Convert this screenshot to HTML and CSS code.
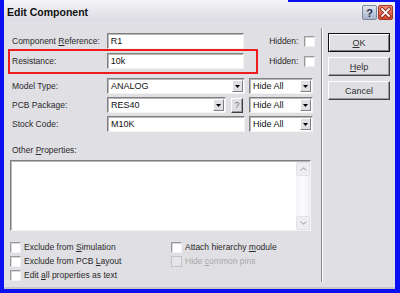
FILE: index.html
```html
<!DOCTYPE html>
<html lang="en">
<head>
    <meta charset="UTF-8">
    <title>Edit Component</title>
    <link rel="stylesheet" href="styles.css">
</head>
<body>
    <div class="window">
        <div class="titlebar">
            <span class="title">Edit Component</span>
            <span class="tb-btn tb-help">?</span>
            <span class="tb-btn tb-close">
                <svg width="11" height="11" viewBox="0 0 11 11">
                    <path d="M2 2 L9 9 M9 2 L2 9" stroke="#7a1a10" stroke-width="3.2" stroke-linecap="square"/>
                    <path d="M2 2 L9 9 M9 2 L2 9" stroke="#fff" stroke-width="1.8" stroke-linecap="square"/>
                </svg>
            </span>
        </div>

        <div class="dialog">
            <div class="fields">
                <div class="row">
                    <label class="lbl">Component <u>R</u>eference:</label>
                    <div class="field w-main">R1</div>
                    <span class="hidden-lbl">Hidden:</span>
                    <span class="check"></span>
                </div>
                <div class="row row-2 highlight">
                    <label class="lbl">Resistance:</label>
                    <div class="field w-main">10k</div>
                    <span class="hidden-lbl">Hidden:</span>
                    <span class="check"></span>
                </div>
                <div class="row row-3">
                    <label class="lbl">Model Type:</label>
                    <div class="combo w-main">
                        <span class="val">ANALOG</span>
                        <span class="arrow"><svg width="5" height="3" viewBox="0 0 5 3"><path d="M0 0 H5 L2.5 3 Z" fill="#000"/></svg></span>
                    </div>
                    <div class="combo w-hide">
                        <span class="val">Hide All</span>
                        <span class="arrow"><svg width="5" height="3" viewBox="0 0 5 3"><path d="M0 0 H5 L2.5 3 Z" fill="#000"/></svg></span>
                    </div>
                </div>
                <div class="row row-n">
                    <label class="lbl">PCB Package:</label>
                    <div class="combo w-pcb">
                        <span class="val">RES40</span>
                        <span class="arrow"><svg width="5" height="3" viewBox="0 0 5 3"><path d="M0 0 H5 L2.5 3 Z" fill="#000"/></svg></span>
                    </div>
                    <span class="mini-btn">?</span>
                    <div class="combo w-hide hide-pcb">
                        <span class="val">Hide All</span>
                        <span class="arrow"><svg width="5" height="3" viewBox="0 0 5 3"><path d="M0 0 H5 L2.5 3 Z" fill="#000"/></svg></span>
                    </div>
                </div>
                <div class="row row-n">
                    <label class="lbl">Stock Code:</label>
                    <div class="field w-main">M10K</div>
                    <div class="combo w-hide">
                        <span class="val">Hide All</span>
                        <span class="arrow"><svg width="5" height="3" viewBox="0 0 5 3"><path d="M0 0 H5 L2.5 3 Z" fill="#000"/></svg></span>
                    </div>
                </div>

                <div class="other-lbl">Other <u>P</u>roperties:</div>
                <div class="textarea">
                    <div class="scrollbar">
                        <span class="sb-btn"><svg width="7" height="4" viewBox="0 0 7 4"><path d="M0.5 3.5 L3.5 0.8 L6.5 3.5" fill="none" stroke="#b4b8c4" stroke-width="1.2"/></svg></span>
                        <span class="sb-track"></span>
                        <span class="sb-btn"><svg width="7" height="4" viewBox="0 0 7 4"><path d="M0.5 0.5 L3.5 3.2 L6.5 0.5" fill="none" stroke="#b4b8c4" stroke-width="1.2"/></svg></span>
                    </div>
                </div>

                <div class="options">
                    <div class="opt"><span class="check"></span><span>Exclude from <u>S</u>imulation</span></div>
                    <div class="opt"><span class="check"></span><span>Attach hierarchy <u>m</u>odule</span></div>
                    <div class="opt"><span class="check"></span><span>Exclude from PCB <u>L</u>ayout</span></div>
                    <div class="opt disabled"><span class="check"></span><span>Hide <u>c</u>ommon pins</span></div>
                    <div class="opt"><span class="check"></span><span>Edit <u>a</u>ll properties as text</span></div>
                </div>
            </div>

            <div class="separator"></div>

            <div class="buttons">
                <span class="btn btn-default"><span><u>O</u>K</span></span>
                <span class="btn"><span><u>H</u>elp</span></span>
                <span class="btn">Cancel</span>
            </div>
        </div>
    </div>
</body>
</html>
```

FILE: styles.css
```css
* {
    box-sizing: border-box;
}
body {
    margin: 0;
    background: #0a10f0;
    font-family: "Liberation Sans", Arial, sans-serif;
    font-size: 8.5px;
    color: #2a2a2a;
}
u {
    text-decoration-thickness: 1px;
    text-underline-offset: 1px;
}
.window {
    position: relative;
    width: 400px;
    height: 293px;
    border-left: 4px solid #0a10f0;
    border-right: 5px solid #0a10f0;
    border-bottom: 5px solid #0a10f0;
    display: flex;
    flex-direction: column;
}
.window::after {
    content: "";
    position: absolute;
    top: 0;
    left: 284px;
    right: -5px;
    height: 2px;
    background: #0a10f0;
}
.titlebar {
    height: 23px;
    display: flex;
    align-items: center;
    padding: 0 2px 1px 3px;
    background: linear-gradient(to bottom, #f4f4f7, #dcdce3);
}
.title {
    flex: 1;
    font-weight: bold;
    font-size: 10.5px;
    color: #111;
    padding-top: 3px;
}
.tb-btn {
    width: 15px;
    height: 15px;
    border-radius: 2px;
    display: flex;
    align-items: center;
    justify-content: center;
    margin-top: 5px;
}
.tb-help {
    margin-right: 1px;
    background: linear-gradient(to bottom, #dfe4ef, #a9b3ca);
    border: 1px solid #7d879f;
    font-weight: bold;
    font-size: 11px;
    color: #27304a;
}
.tb-close {
    background: linear-gradient(to bottom, #f08a70, #d0442c);
    border: 1px solid #a03a2a;
}
.dialog {
    flex: 1;
    display: flex;
    background: #e0dfe3;
    padding: 7px 0 5px 6px;
    border-bottom: 2px solid #c6c6cc;
}
.fields {
    width: 305px;
    margin-top: 5px;
    display: flex;
    flex-direction: column;
}
.row {
    display: flex;
    align-items: center;
    height: 16px;
}
.row-2 {
    margin-top: 4px;
}
.row-3 {
    margin-top: 9px;
}
.row-n {
    margin-top: 3px;
}
.highlight {
    position: relative;
}
.highlight::before {
    content: "";
    position: absolute;
    left: -2px;
    top: -4px;
    width: 246px;
    height: 21px;
    border: 2px solid #ee1c1c;
}
.lbl {
    width: 97px;
    padding-left: 2px;
}
.field,
.combo,
.textarea {
    background: #fff;
    border: 1px solid;
    border-color: #7f7f7f #f4f4f0 #f4f4f0 #7f7f7f;
    box-shadow: inset 1px 1px 0 #b8b8b8;
}
.field {
    height: 16px;
    padding: 0 3px;
    line-height: 14px;
    font-size: 9px;
    color: #111;
}
.w-main {
    width: 138px;
}
.w-pcb {
    width: 119px;
}
.w-hide {
    width: 64px;
    margin-left: 4px;
}
.hide-pcb {
    margin-left: 6px;
}
.hidden-lbl {
    margin-left: 25px;
    width: 35px;
}
.check {
    width: 11px;
    height: 11px;
    flex: none;
    background: #fff;
    border: 1px solid;
    border-color: #9a9a9a #f2f2f2 #f2f2f2 #9a9a9a;
    box-shadow: inset 1px 1px 0 #d8d8d8;
}
.combo {
    height: 16px;
    display: flex;
    align-items: center;
    padding: 0 1px 0 3px;
    font-size: 9px;
    color: #111;
}
.combo .val {
    flex: 1;
}
.combo .arrow {
    width: 11px;
    height: 12px;
    display: flex;
    align-items: center;
    justify-content: center;
    background: #e0dfe3;
    border: 1px solid;
    border-color: #fff #7f7f7f #7f7f7f #fff;
}
.mini-btn {
    width: 12px;
    height: 15px;
    margin-left: 5px;
    display: flex;
    align-items: center;
    justify-content: center;
    background: #e0dfe3;
    border: 1px solid;
    border-color: #fff #404040 #404040 #fff;
    box-shadow: inset -1px -1px 0 #9a9a9a;
    color: #777;
    font-size: 9px;
}
.other-lbl {
    margin-top: 12px;
    height: 12px;
    line-height: 12px;
    padding-left: 2px;
}
.textarea {
    margin-top: 4px;
    width: 301px;
    height: 71px;
    display: flex;
    justify-content: flex-end;
    padding: 1px 0 0 0;
}
.scrollbar {
    width: 14px;
    display: flex;
    flex-direction: column;
    background: linear-gradient(to right, #f3f3f8, #fbfbfe, #eeeef4);
}
.sb-btn {
    height: 14px;
    display: flex;
    align-items: center;
    justify-content: center;
    background: #eeeef0;
    border: 1px solid #e2e2e8;
    border-radius: 2px;
}
.sb-track {
    flex: 1;
}
.options {
    margin-top: 9px;
    display: grid;
    grid-template-columns: 161px 1fr;
    grid-auto-rows: 14px;
}
.opt {
    display: flex;
    align-items: center;
    gap: 3px;
}
.opt.disabled {
    color: #a8a8ac;
}
.opt.disabled .check {
    background: #e6e6e8;
    border-color: #c4c4c8;
    box-shadow: none;
}
.separator {
    width: 2px;
    margin-left: 6px;
    border-left: 1px solid #8a8a8e;
    border-right: 1px solid #fff;
}
.buttons {
    margin-left: 5px;
    margin-top: 5px;
    display: flex;
    flex-direction: column;
    gap: 5px;
}
.btn {
    width: 62px;
    height: 19px;
    display: flex;
    align-items: center;
    justify-content: center;
    background: #e0dfe3;
    border: 1px solid;
    border-color: #fff #404040 #404040 #fff;
    box-shadow: inset -1px -1px 0 #9a9a9a;
    font-size: 9px;
    color: #333;
}
.btn-default {
    border: 1px solid #111;
    box-shadow: inset 1px 1px 0 #fff, inset -1px -1px 0 #7f7f7f;
}
```
